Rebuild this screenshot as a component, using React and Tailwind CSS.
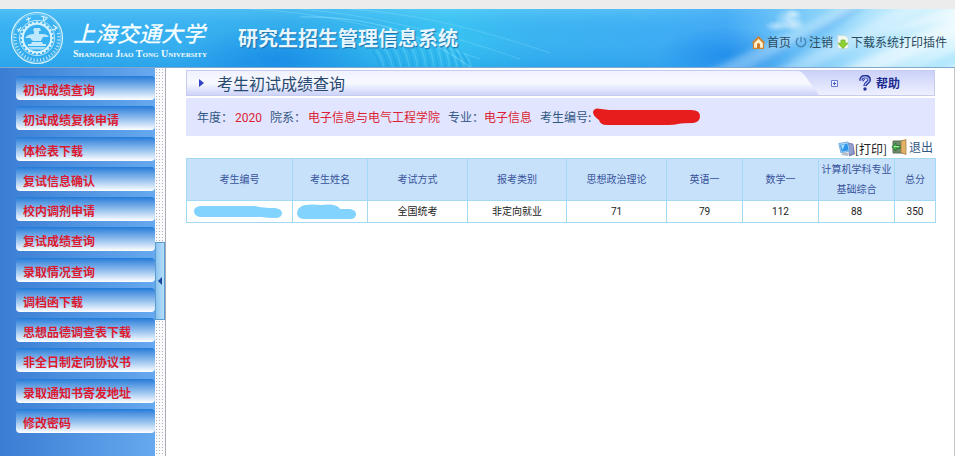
import React from "react";

const MENU = [
  "初试成绩查询",
  "初试成绩复核申请",
  "体检表下载",
  "复试信息确认",
  "校内调剂申请",
  "复试成绩查询",
  "录取情况查询",
  "调档函下载",
  "思想品德调查表下载",
  "非全日制定向协议书",
  "录取通知书寄发地址",
  "修改密码",
];

function Emblem() {
  const teeth = Array.from({ length: 24 }, (_, i) => i * 15);
  const marks = Array.from({ length: 25 }, (_, i) => 100 - i * 8.4);
  return (
    <svg viewBox="0 0 54 54" className="h-[54px] w-[54px] shrink-0" fill="none" stroke="#d5f1fd" aria-hidden="true">
      <circle cx="27" cy="27" r="25.5" strokeWidth="1.2" />
      <circle cx="27" cy="27" r="24" strokeWidth="0.4" />
      {marks.map((a) => (
        <path key={a} d="M27 47.5v3" strokeWidth="1.1" opacity="0.85" transform={`rotate(${a} 27 27)`} />
      ))}
      <path d="M7 18l4 2M8 21l3-5M16 9l5-2M18 6l1 5M31 5l6 2-3 3M34 5l-1 5M43 14l4 3-5 2M45 20l1-5" strokeWidth="1.2" />
      <circle cx="27" cy="27" r="17.6" strokeWidth="0.8" />
      {teeth.map((a) => (
        <path key={a} d="M27 10.4v2.2" strokeWidth="2.2" transform={`rotate(${a} 27 27)`} />
      ))}
      <circle cx="27" cy="27" r="14.2" strokeWidth="2" />
      <g fill="#d5f1fd" stroke="none">
        <path d="M24 17h6l1 3h-2v3h4q4 0 6 3h-6l-2 4H23l-3-3h-5q3-4 8-4h1v-3h-1z" fillOpacity="0.85" />
        <path d="M22 31h10l1 2h3v2H18v-2h3z" fillOpacity="0.9" />
        <path d="M18 36h18l-3 2.500H21z" fillOpacity="0.7" />
      </g>
    </svg>
  );
}

function HeaderArt() {
  const ripples = Array.from({ length: 24 }, (_, i) => i);
  return (
    <svg
      viewBox="0 0 955 58"
      preserveAspectRatio="none"
      className="absolute inset-0 h-full w-full"
      aria-hidden="true"
    >
      <defs>
        <linearGradient id="sky" x1="0" x2="1" y1="0" y2="0">
          <stop offset="0" stopColor="#37b0f1" />
          <stop offset="0.2" stopColor="#38b0f0" />
          <stop offset="0.3" stopColor="#2fabeb" />
          <stop offset="0.47" stopColor="#38c4f2" />
          <stop offset="0.56" stopColor="#3bb4f1" />
          <stop offset="0.76" stopColor="#42a9f5" />
          <stop offset="0.84" stopColor="#7ccbf9" />
          <stop offset="0.92" stopColor="#b5e6fd" />
          <stop offset="1" stopColor="#ddf6fe" />
        </linearGradient>
        <linearGradient id="shade" x1="0" x2="0" y1="0" y2="1">
          <stop offset="0" stopColor="#7fdcff" stopOpacity="0.35" />
          <stop offset="0.5" stopColor="#2aa6ee" stopOpacity="0" />
          <stop offset="1" stopColor="#0a84dc" stopOpacity="0.28" />
        </linearGradient>
        <linearGradient id="shadeFade" x1="0" x2="1" y1="0" y2="0">
          <stop offset="0.75" stopColor="#ffffff" />
          <stop offset="1" stopColor="#000000" />
        </linearGradient>
        <mask id="leftSide">
          <rect width="860" height="58" fill="url(#shadeFade)" />
        </mask>
        <radialGradient id="deep">
          <stop offset="0" stopColor="#1280e6" stopOpacity="0.6" />
          <stop offset="1" stopColor="#1280e6" stopOpacity="0" />
        </radialGradient>
        <radialGradient id="cloud">
          <stop offset="0" stopColor="#ffffff" stopOpacity="0.5" />
          <stop offset="1" stopColor="#ffffff" stopOpacity="0" />
        </radialGradient>
        <filter id="soft" x="-10%" y="-10%" width="120%" height="120%">
          <feGaussianBlur stdDeviation="3" />
        </filter>
      </defs>
      <rect width="955" height="58" fill="url(#sky)" />
      <rect width="860" height="58" fill="url(#shade)" mask="url(#leftSide)" />
      <ellipse cx="275" cy="50" rx="100" ry="32" fill="url(#deep)" />
      <path d="M300 8Q400 6 470 58" fill="none" stroke="#8be3ff" strokeWidth="1.2" opacity="0.45" />
      <path d="M250 0Q350 4 480 50M300 0q100 8 220 50M350 0q90 6 200 44" fill="none" stroke="#a5ecff" strokeWidth="1" opacity="0.25" />
      {ripples.map((i) => (
        <path
          key={i}
          d={`M${372 + i * 4} ${42 - Math.min(i, 12) + Math.max(i - 16, 0) * 2}q8 8 10 30`}
          fill="none"
          stroke={i % 2 ? "#8be3fb" : "#1592dc"}
          strokeWidth="1.2"
          opacity="0.3"
        />
      ))}
      <ellipse cx="725" cy="46" rx="70" ry="28" fill="url(#deep)" />
      <g filter="url(#soft)">
        <path d="M700 66L850-6h10L735 66zM770 66L905-6h30L800 66z" fill="#ffffff" opacity="0.3" />
        <path d="M735 66L860-6h12L770 66z" fill="#3fa3f0" opacity="0.3" />
        <path d="M830 66L965 4v20L870 66zM860 30L965-6v12z" fill="#ffffff" opacity="0.5" />
        <path d="M900 66l65-28v14l-30 14z" fill="#8fdcfb" opacity="0.5" />
      </g>
      <ellipse cx="789" cy="10" rx="15" ry="11" fill="url(#cloud)" />
      <ellipse cx="777" cy="17" rx="13" ry="6" fill="url(#cloud)" />
      <ellipse cx="794" cy="16" rx="12" ry="7" fill="url(#cloud)" />
      <ellipse cx="793" cy="5" rx="9" ry="5" fill="url(#cloud)" />
    </svg>
  );
}

function HomeIcon() {
  return (
    <svg viewBox="0 0 13 13" className="h-[13px] w-[13px]" aria-hidden="true">
      <path d="M1.500 6.500v5.900h10V6.500l-5-5z" fill="#fff0cd" stroke="#cf8434" strokeWidth="1.200" />
      <path d="M.7 7L6.500 1.300 12.300 7" fill="none" stroke="#cf8434" strokeWidth="1.800" />
      <path d="M5 12V8.500a1.500 1.500 0 0 1 3 0V12z" fill="#cf7a28" />
    </svg>
  );
}

function PowerIcon() {
  return (
    <svg viewBox="0 0 12 12" className="h-3 w-3" fill="none" stroke="#4a86b4" strokeWidth="1.400" aria-hidden="true">
      <path d="M3.500 2a4.700 4.700 0 1 0 5 0M6 .8v5.500" />
    </svg>
  );
}

function DownloadIcon() {
  return (
    <svg viewBox="0 0 12 14" className="h-[14px] w-3" aria-hidden="true">
      <path d="M.8.6h7.400l3 3v9.800H.8z" fill="#f4faf2" stroke="#bfd5dc" strokeWidth="0.700" />
      <path d="M4 5h4v3.200h3L6 13.400 1 8.200h3z" fill="#8ed22f" stroke="#6fb428" strokeWidth="0.800" />
    </svg>
  );
}

function HelpIcon() {
  return (
    <svg viewBox="0 0 12 16" className="h-4 w-3" fill="none" aria-hidden="true">
      <path d="M2 5.500C1.500.2 10.500.2 10.200 5c0 3-4.200 2.700-4.200 6" stroke="#26339b" strokeWidth="3.600" />
      <path d="M2 5.500C1.500.8 10 .8 10 5c0 2.700-4 2.600-4 5.500" stroke="#b9c6f2" strokeWidth="1.200" />
      <path d="M4 6.500q0-2 2-2" stroke="#26339b" />
      <circle cx="6" cy="14" r="1.700" fill="#26339b" />
    </svg>
  );
}

function PrintIcon() {
  return (
    <svg viewBox="0 0 17 16" className="h-4 w-[17px]" aria-hidden="true">
      <path d="M10 2l5 1 1.500 10-5 2z" fill="#7d87c0" stroke="#5a639f" strokeWidth="0.600" />
      <path d="M12 3v10M14 3.500v9" stroke="#c3c9e8" strokeWidth="0.700" />
      <path d="M.8 2.500L10 1l2 9-9 2z" fill="#b9dcf6" stroke="#5f9fd8" strokeWidth="0.800" />
      <path d="M2 3.700L9.300 2.500l1.500 6.700-7.100 1.500z" fill="#2f95e8" />
      <path d="M3 4l4-.8L4.500 9z" fill="#a5dcff" />
      <path d="M3 14l3-3 5 1-1 3z" fill="#b5bfcc" />
    </svg>
  );
}

function ExitIcon() {
  return (
    <svg viewBox="0 0 16 16" className="h-4 w-4" aria-hidden="true">
      <path d="M2 2h12v12H2z" fill="#6c8b69" stroke="#5e6f5b" />
      <path d="M10 2l5-1.500v15L10 13.500z" fill="#e0b267" stroke="#a3763a" strokeWidth="0.700" />
      <path d="M.8 8L5 4v2.500h4v3H5V12z" fill="#4fb552" stroke="#1f7030" strokeWidth="0.700" />
      <path d="M3 7.500h5" stroke="#b4e6a1" />
    </svg>
  );
}

function HeaderLink({ icon, children }) {
  return (
    <a href="#" className="flex items-center gap-[2px]">
      {icon}
      <span>{children}</span>
    </a>
  );
}

function Header() {
  return (
    <header className="relative h-[59px] border-b border-[#7fa9cf]">
      <HeaderArt />
      <div className="relative flex h-full items-center pr-2 pl-[10px]">
        <Emblem />
        <div className="ml-[9px] flex w-[132px] shrink-0 flex-col text-[#f3fcff]">
          <span className="text-[22px] leading-8 font-medium whitespace-nowrap italic">上海交通大学</span>
          <span className="font-['Liberation_Serif',serif] text-[10px] leading-3 font-bold whitespace-nowrap [font-variant:small-caps]">
            Shanghai Jiao Tong University
          </span>
        </div>
        <h1 className="ml-[33px] text-[20px] leading-7 font-bold whitespace-nowrap text-[#e6f7ff] [text-shadow:1px_1px_1px_#1d6fa9]">
          研究生招生管理信息系统
        </h1>
        <nav className="mt-2 ml-auto flex items-center gap-1 text-[12px] leading-4 whitespace-nowrap text-[#2a4a60]">
          <HeaderLink icon={<HomeIcon />}>首页</HeaderLink>
          <HeaderLink icon={<PowerIcon />}>注销</HeaderLink>
          <HeaderLink icon={<DownloadIcon />}>下载系统打印插件</HeaderLink>
        </nav>
      </div>
    </header>
  );
}

function Sidebar() {
  return (
    <aside className="w-[155px] shrink-0 bg-linear-to-r from-[#3a7dd3] to-[#66a9ef] pt-2 pl-4">
      <ul className="flex h-[357px] flex-col justify-between">
        {MENU.map((label) => (
          <li key={label}>
            <a
              href="#"
              className="flex h-6 items-center rounded-[4px] bg-linear-to-b from-[#1f7bd8] via-[#8dbcec] to-white pt-1 pl-[7px] text-[12px] leading-4 font-bold whitespace-nowrap text-[#dc1a30]"
            >
              {label}
            </a>
          </li>
        ))}
      </ul>
    </aside>
  );
}

function Splitter() {
  return (
    <div className="flex w-[11px] shrink-0 flex-col border-r border-[#a9acb8] bg-[#fbfbfd] bg-[radial-gradient(#b4b4c0_0.5px,transparent_1px)] bg-size-[3px_3px] pt-[174px]">
      <button
        type="button"
        aria-label="收起菜单"
        className="flex h-[78px] w-[10px] items-center justify-center border border-[#5a9bd0] bg-linear-to-r from-[#8cc4ef] to-[#b5dffa]"
      >
        <svg viewBox="0 0 4 8" className="h-2 w-1" aria-hidden="true">
          <path d="M4 0v8L0 4z" fill="#16479b" />
        </svg>
      </button>
    </div>
  );
}

function PanelTitle() {
  return (
    <div className="flex h-[26px] border border-[#c6ccee] bg-linear-to-b from-[#cbd1f8] to-[#eef0ff]">
      <div className="flex flex-1 items-center bg-linear-to-b from-[#f0f2ff] via-[#f8f9ff] to-[#cdd3fa] pl-3">
        <svg viewBox="0 0 5 8" className="h-2 w-[5px]" aria-hidden="true">
          <path d="M0 0l5 4-5 4z" fill="#3044c4" />
        </svg>
        <h2 className="ml-[13px] text-[16px] leading-6 whitespace-nowrap text-[#284a70]">考生初试成绩查询</h2>
      </div>
      <svg viewBox="0 0 20 24" preserveAspectRatio="none" className="h-full w-5" aria-hidden="true">
        <defs>
          <linearGradient id="tab" x1="0" x2="0" y1="0" y2="1">
            <stop offset="0" stopColor="#f0f2ff" />
            <stop offset="0.5" stopColor="#f8f9ff" />
            <stop offset="1" stopColor="#cdd3fa" />
          </linearGradient>
        </defs>
        <path d="M0 0q5 2 9 9l11 15H0z" fill="url(#tab)" />
      </svg>
      <div className="flex w-[115px] items-center">
        <svg viewBox="0 0 7 7" className="ml-3 h-[7px] w-[7px]" aria-hidden="true">
          <path d="M.5.5h6v6h-6z" fill="#e9edff" stroke="#6b7ad2" />
          <path d="M3.500 2v3M2 3.500h3" stroke="#4656c0" />
        </svg>
        <a href="#" className="ml-[21px] flex items-center gap-[5px] text-[12px] leading-4 font-bold whitespace-nowrap text-[#1b2990]">
          <HelpIcon />
          帮助
        </a>
      </div>
    </div>
  );
}

function Field({ label, children }) {
  return (
    <div className="flex items-center">
      <dt>{label}</dt>
      <dd className="text-[#dc1f35]">{children}</dd>
    </div>
  );
}

function CandidateInfo() {
  return (
    <dl className="mt-[2px] flex h-[38px] items-center gap-2 bg-[#e1e5ff] pl-[11px] text-[12px] leading-4 whitespace-nowrap text-[#315783]">
      <Field label="年度：">
        <span className="ml-[2px] font-[Roboto,sans-serif]">2020</span>
      </Field>
      <Field label="院系：">
        <span className="ml-[2px]">电子信息与电气工程学院</span>
      </Field>
      <Field label="专业：">电子信息</Field>
      <Field label="考生编号:">
        <svg viewBox="0 0 107 18" className="ml-[2px] h-[18px] w-[107px]" aria-hidden="true">
          <path
            d="M0 4Q1-1 8 1l8 1 82 0q9 0 9 6 0 6-7 7-10 0-15 1-4 1-10 1H14Q7 17 6 12 0 8 0 4z"
            fill="#e71d1d"
          />
        </svg>
      </Field>
    </dl>
  );
}

function Redaction({ short }) {
  return short ? (
    <svg viewBox="0 0 59 16" className="ml-1 h-4 w-[59px]" aria-hidden="true">
      <path d="M8 1q8-1 16 0 16-2 19 4h10q6 1 6 5 0 5-6 5H6q-6-1-6-6 0-6 8-8z" fill="#82d3fd" />
    </svg>
  ) : (
    <svg viewBox="0 0 88 14" className="ml-[7px] h-[14px] w-[88px]" aria-hidden="true">
      <path d="M6 1h55q8 2 20 2 7 1 7 5 0 5-7 5-8 0-14-1H6Q0 11 0 6q0-4 6-5z" fill="#82d3fd" />
    </svg>
  );
}

const COLUMNS = [
  { title: "考生编号", width: "w-[106px]", value: <Redaction /> },
  { title: "考生姓名", width: "w-[75px]", value: <Redaction short /> },
  { title: "考试方式", width: "w-[100px]", value: "全国统考" },
  { title: "报考类别", width: "w-[99px]", value: "非定向就业" },
  { title: "思想政治理论", width: "w-[100px]", value: "71" },
  { title: "英语一", width: "w-[76px]", value: "79" },
  { title: "数学一", width: "w-[76px]", value: "112" },
  { title: "计算机学科专业基础综合", width: "w-[76px]", value: "88" },
  { title: "总分", width: "w-[41px]", value: "350" },
];

function ScoreTable() {
  return (
    <table className="w-full table-fixed border-collapse text-center font-[Roboto,'Noto_Sans_CJK_SC',sans-serif] text-[10px]">
      <thead>
        <tr className="h-[42px] bg-[#c7e1fa] leading-5 text-[#37539b]">
          {COLUMNS.map((c) => (
            <th key={c.title} scope="col" className={`${c.width} border border-[#a3d9f3] px-[2px] font-normal`}>
              {c.title}
            </th>
          ))}
        </tr>
      </thead>
      <tbody>
        <tr className="h-[22px] leading-4 text-[#222222]">
          {COLUMNS.map((c) => (
            <td key={c.title} className="border border-[#a3d9f3]">
              {c.value}
            </td>
          ))}
        </tr>
      </tbody>
    </table>
  );
}

export default function App() {
  return (
    <div className="min-h-screen bg-white pr-[5px] font-['Noto_Sans_CJK_SC',sans-serif]">
      <div className="flex min-h-screen flex-col">
        <div className="h-[9px] bg-[#ececec]" />
        <Header />
        <div className="flex flex-1">
          <Sidebar />
          <Splitter />
          <main className="min-w-0 flex-1 border-r border-[#c3c5cb] pt-[2px] pr-[19px] pl-5">
            <PanelTitle />
            <CandidateInfo />
            <div className="flex h-[22px] items-center justify-end gap-1 pr-[2px] leading-4 whitespace-nowrap">
              <button type="button" className="flex items-center pt-1 text-[12px] text-[#222222]">
                <PrintIcon />
                [打印]
              </button>
              <button type="button" className="flex items-center gap-[2px] text-[12px] text-[#315783]">
                <ExitIcon />
                退出
              </button>
            </div>
            <ScoreTable />
          </main>
        </div>
      </div>
    </div>
  );
}
